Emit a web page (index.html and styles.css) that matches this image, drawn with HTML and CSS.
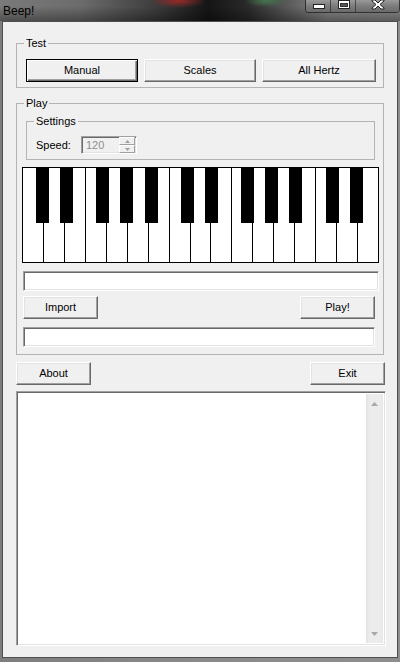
FILE: index.html
```html
<!DOCTYPE html>
<html>
<head>
<meta charset="utf-8">
<title>Beep!</title>
<link rel="stylesheet" href="styles.css">
</head>
<body>
<div class="window">
  <div class="titlebar">
    <span class="title">Beep!</span>
    <div class="caption-btns">
      <span class="cb cb-min"><svg width="25" height="13" viewBox="0 0 25 13"><rect x="7.5" y="4.5" width="11" height="4" fill="#fff" stroke="#222" stroke-width="1"/></svg></span>
      <span class="cb cb-max"><svg width="25" height="13" viewBox="0 0 25 13"><rect x="7.5" y="0.5" width="11" height="8" fill="#fff" stroke="#222"/><rect x="9.5" y="3.5" width="7" height="3" fill="#555" stroke="#333"/></svg></span>
      <span class="cb cb-close"><svg width="44" height="13" viewBox="0 0 44 13"><path d="M16 0 L19 0 L22 3 L25 0 L28 0 L28 1 L24 4.5 L28 8 L28 9 L25 9 L22 6 L19 9 L16 9 L16 8 L20 4.5 L16 1 Z" fill="#fff" stroke="#222" stroke-width="1"/></svg></span>
    </div>
  </div>
  <div class="client">
    <fieldset class="group group-test">
      <legend>Test</legend>
      <div class="test-btns">
        <button class="btn btn-default">Manual</button>
        <button class="btn">Scales</button>
        <button class="btn">All Hertz</button>
      </div>
    </fieldset>
    <fieldset class="group group-play">
      <legend>Play</legend>
      <fieldset class="group group-settings">
        <legend>Settings</legend>
        <div class="speed-row">
          <span class="speed-label">Speed:</span>
          <div class="spin sunken">
            <span class="spin-value">120</span>
            <div class="spin-btns">
              <span class="spin-btn"><svg width="5" height="3" viewBox="0 0 5 3"><path d="M2.5 0 L5 3 L0 3 Z" fill="#a0a0a0"/></svg></span>
              <span class="spin-btn"><svg width="5" height="3" viewBox="0 0 5 3"><path d="M0 0 L5 0 L2.5 3 Z" fill="#a0a0a0"/></svg></span>
            </div>
          </div>
        </div>
      </fieldset>
      <div class="piano">
        <div class="wk"></div><div class="wk"></div><div class="wk"></div><div class="wk"></div>
        <div class="wk"></div><div class="wk"></div><div class="wk"></div><div class="wk"></div>
        <div class="wk"></div><div class="wk"></div><div class="wk"></div><div class="wk"></div>
        <div class="wk"></div><div class="wk"></div><div class="wk"></div><div class="wk"></div>
        <div class="wk"></div>
        <div class="bk bk1"></div><div class="bk bk2"></div><div class="bk bk3"></div>
        <div class="bk bk4"></div><div class="bk bk5"></div><div class="bk bk6"></div>
        <div class="bk bk7"></div><div class="bk bk8"></div><div class="bk bk9"></div>
        <div class="bk bk10"></div><div class="bk bk11"></div><div class="bk bk12"></div>
      </div>
      <div class="textbox textbox-1 sunken"></div>
      <div class="btn-row play-row">
        <button class="btn">Import</button>
        <button class="btn">Play!</button>
      </div>
      <div class="textbox textbox-2 sunken"></div>
    </fieldset>
    <div class="btn-row bottom-row">
      <button class="btn">About</button>
      <button class="btn">Exit</button>
    </div>
    <div class="listbox sunken">
      <div class="list-area"></div>
      <div class="scrollbar">
        <span class="sb-arrow"><svg width="7" height="4" viewBox="0 0 7 4"><path d="M3.5 0 L7 4 L0 4 Z" fill="#a8a8a8"/></svg></span>
        <span class="sb-arrow"><svg width="7" height="4" viewBox="0 0 7 4"><path d="M0 0 L7 0 L3.5 4 Z" fill="#a8a8a8"/></svg></span>
      </div>
    </div>
  </div>
</div>
</body>
</html>
```

FILE: styles.css
```css
* { box-sizing: border-box; }
html, body { margin: 0; padding: 0; }
body {
  width: 400px;
  height: 662px;
  overflow: hidden;
  font: 11px/13px "Liberation Sans", Arial, sans-serif;
  color: #000;
  background: #858585;
}
.window {
  width: 400px;
  height: 662px;
  padding: 0 2px 4px;
  display: flex;
  flex-direction: column;
  background: linear-gradient(to right, #7e7e7e, #8a8a8a 50%, #8e8e8e);
}
.titlebar {
  height: 21px;
  margin: 0 -2px;
  display: flex;
  align-items: flex-start;
  background:
    radial-gradient(ellipse 28px 7px at 178px 1px, rgba(170, 40, 40, 0.85), rgba(170, 40, 40, 0) 100%),
    radial-gradient(ellipse 22px 6px at 266px 1px, rgba(70, 130, 80, 0.8), rgba(70, 130, 80, 0) 100%),
    linear-gradient(to bottom, rgba(0,0,0,0) 30%, rgba(0,0,0,0.35) 100%),
    linear-gradient(to right, #7a7a7a 0%, #6c6c6c 20%, #3a3a3a 40%, #151515 52%, #2a2a2a 62%, #5a5a5a 72%, #878787 82%, #8c8c8c 100%);
}
.title {
  margin: 4px 0 0 3px;
  font: 12px/14px "Liberation Sans", Arial, sans-serif;
  color: #000;
}
.caption-btns {
  margin-left: auto;
  display: flex;
  height: 13px;
  border: 1px solid rgba(20, 20, 20, 0.7);
  border-top: 0;
  border-radius: 0 0 4px 4px;
  overflow: hidden;
  width: 95px;
  box-shadow: inset 0 0 0 1px rgba(255,255,255,0.35);
}
.cb {
  display: block;
  height: 12px;
  background: linear-gradient(to bottom, #9a9a9a, #7c7c7c 50%, #6a6a6a);
  border-right: 1px solid rgba(30,30,30,0.6);
}
.cb svg { display: block; }
.cb-min { width: 25px; }
.cb-max { width: 25px; }
.cb-close { width: 44px; border-right: 0; }

.client {
  flex: 1;
  background: #f0f0f0;
  border: 1px solid #4e4e4e;
  padding: 15px 0 0 13px;
}

.group {
  margin: 0;
  padding: 0;
  min-width: 0;
  border: 1px solid #b4b4b4;
  border-radius: 0;
}
.group > legend {
  margin-left: 7px;
  padding: 0 2px;
  line-height: 13px;
}

.group-test {
  width: 368px;
  padding: 9px 0 5px 0;
}
.test-btns {
  margin-left: 9px;
  display: grid;
  grid-template-columns: 112px 112px 114px;
  gap: 6px;
}
.test-btns .btn { width: auto; }

.btn {
  width: 75px;
  height: 23px;
  padding: 0;
  margin: 0;
  font: 11px/13px "Liberation Sans", Arial, sans-serif;
  color: #000;
  background: #f0f0f0;
  border: 1px solid;
  border-color: #fff #696969 #696969 #fff;
  box-shadow: inset -1px -1px #a0a0a0, inset 1px 1px #e3e3e3;
  border-radius: 0;
}
.btn-default {
  border-color: #000;
  box-shadow: inset 1px 1px #fff, inset -1px -1px #696969, inset -2px -2px #a0a0a0;
}

.sunken {
  border: 1px solid;
  border-color: #a0a0a0 #fff #fff #a0a0a0;
  box-shadow: inset 1px 1px #696969, inset -1px -1px #e3e3e3;
}

.group-play {
  width: 368px;
  margin-top: 9px;
  padding: 5px 0 7px 0;
}
.group-settings {
  width: 349px;
  margin-left: 9px;
  padding: 8px 0 5px 0;
}
.speed-row {
  margin-left: 9px;
  display: flex;
  align-items: center;
}
.speed-label { width: 45px; }
.spin {
  width: 56px;
  height: 18px;
  display: flex;
  align-items: center;
  background: #f0f0f0;
  padding: 1px;
}
.spin-value {
  flex: 1;
  padding-left: 3px;
  color: #8d8d8d;
}
.spin-btns {
  width: 16px;
  height: 16px;
  display: flex;
  flex-direction: column;
}
.spin-btn {
  flex: 1;
  display: flex;
  align-items: center;
  justify-content: center;
  background: #f0f0f0;
  border: 1px solid;
  border-color: #fff #a0a0a0 #a0a0a0 #fff;
}
.spin-btn svg { display: block; }

.piano {
  position: relative;
  width: 357px;
  height: 96px;
  margin: 7px 0 0 5px;
  border: 1px solid #000;
  background: #fff;
  display: flex;
}
.wk {
  flex: 1;
  border-left: 1px solid #000;
}
.wk:first-child { border-left: 0; }
.bk {
  position: absolute;
  top: 0;
  width: 13px;
  height: 55px;
  background: #000;
}
.bk1 { left: 13px; }
.bk2 { left: 37px; }
.bk3 { left: 73px; }
.bk4 { left: 97px; }
.bk5 { left: 122px; }
.bk6 { left: 158px; }
.bk7 { left: 182px; }
.bk8 { left: 218px; }
.bk9 { left: 242px; }
.bk10 { left: 266px; }
.bk11 { left: 303px; }
.bk12 { left: 327px; }

.textbox {
  height: 20px;
  background: #fff;
  margin-left: 6px;
}
.textbox-1 { width: 356px; margin-top: 8px; }
.textbox-2 { width: 352px; margin-top: 8px; }

.btn-row {
  display: flex;
  justify-content: space-between;
}
.play-row {
  width: 352px;
  margin: 5px 0 0 6px;
}
.bottom-row {
  width: 369px;
  margin-top: 7px;
}

.listbox {
  width: 370px;
  height: 255px;
  margin-top: 6px;
  background: #fff;
  display: flex;
  padding: 2px 2px 2px 2px;
}
.list-area { flex: 1; }
.scrollbar {
  width: 17px;
  background: linear-gradient(to right, #e2e2e2, #ececec 20%, #ececec 85%, #e6e6e6);
  display: flex;
  flex-direction: column;
  justify-content: space-between;
  align-items: center;
  padding: 8px 0 7px;
}
.sb-arrow svg { display: block; }
```
